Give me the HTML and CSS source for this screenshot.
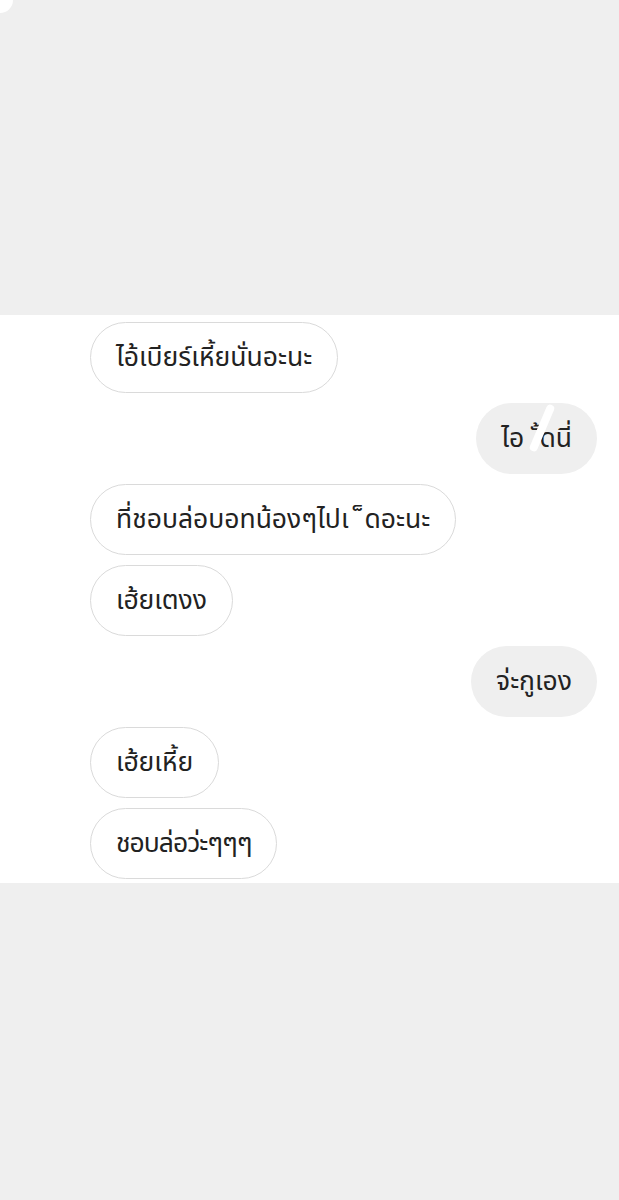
FILE: index.html
```html
<!DOCTYPE html>
<html lang="th">
<head>
    <meta charset="UTF-8">
    <meta name="viewport" content="width=device-width, initial-scale=1.0">
    <title>Chat</title>
    <link rel="stylesheet" href="styles.css">
</head>
<body>
    <div class="top">
        <div class="corner"></div>
    </div>

    <div class="chat">
        <div class="bubble them">ไอ้เบียร์เหี้ยนั่นอะนะ</div>
        <div class="bubble me">ไอ<span class="censor">ส</span>ั้ดนี่</div>
        <div class="bubble them">ที่ชอบล่อบอทน้องๆไปเ<span class="ghost">ย</span>็ดอะนะ</div>
        <div class="bubble them">เฮ้ยเตงง</div>
        <div class="bubble me">จ่ะกูเอง</div>
        <div class="bubble them">เฮ้ยเหี้ย</div>
        <div class="bubble them narrow">ชอบล่อว่ะๆๆๆ</div>
    </div>

    <div class="bottom"></div>
</body>
</html>
```

FILE: styles.css
```css
body {
    margin: 0;
    background-color: #efefef;
    font-family: 'Noto Sans Thai', 'Noto Sans', 'DejaVu Sans', sans-serif;
    color: #222;
}
.top {
    height: 315px;
    position: relative;
}
.corner {
    position: absolute;
    top: 0;
    left: 0;
    width: 13px;
    height: 13px;
    background-color: #fff;
    border-bottom-right-radius: 13px;
}
.chat {
    background-color: #fff;
    display: flex;
    flex-direction: column;
    align-items: flex-start;
    gap: 10px;
    padding: 7px 22px 4px 90px;
}
.bubble {
    position: relative;
    box-sizing: border-box;
    height: 71px;
    display: flex;
    align-items: center;
    padding: 0 25px;
    border-radius: 36px;
    font-size: 26.5px;
    white-space: nowrap;
}
.them {
    border: 1.5px solid #dadada;
    background-color: #fff;
}
.me {
    align-self: flex-end;
    background-color: #efefef;
}
.narrow {
    letter-spacing: -1px;
}
.censor {
    position: relative;
    color: #efefef;
}
.censor::after {
    content: '';
    position: absolute;
    left: 14px;
    top: -16px;
    width: 8px;
    height: 50px;
    background-color: #fff;
    border-radius: 4px;
    transform: rotate(23deg);
}
.ghost {
    color: #fff;
}
.bottom {
    height: 317px;
}
```
